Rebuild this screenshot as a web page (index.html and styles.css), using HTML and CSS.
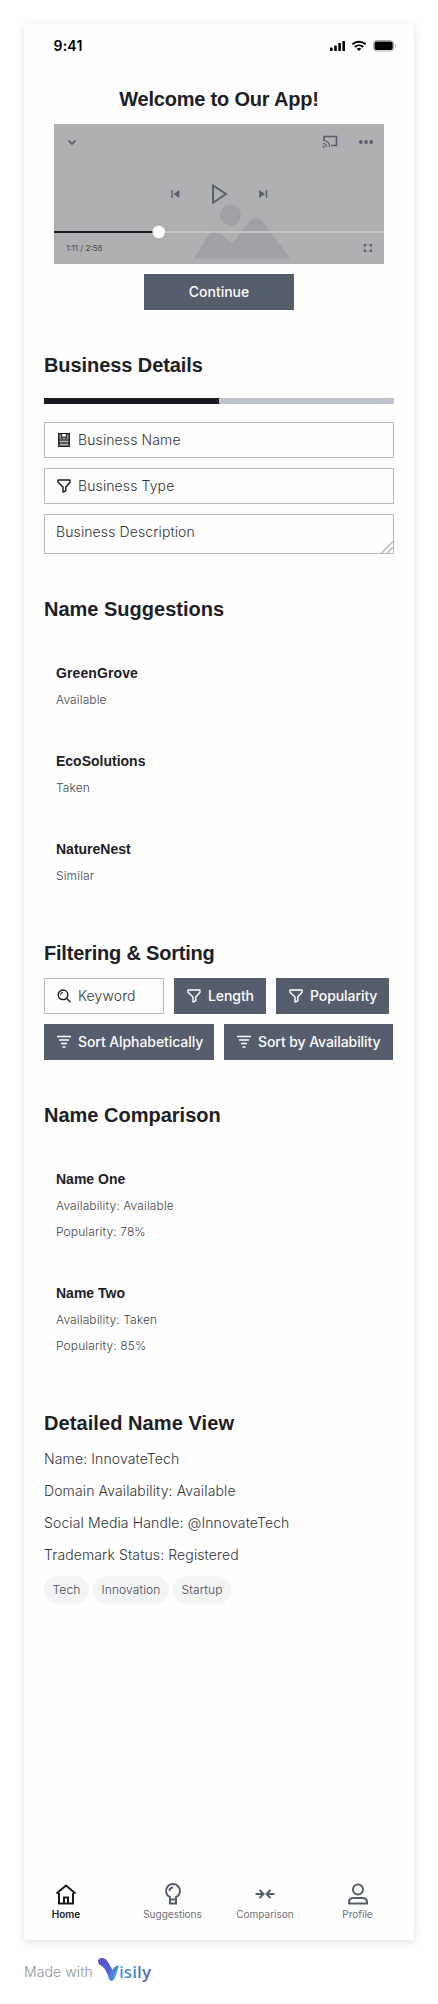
FILE: index.html
```html
<!DOCTYPE html>
<html lang="en">
<head>
<meta charset="utf-8">
<title>Welcome to Our App!</title>
<link rel="stylesheet" href="styles.css">
</head>
<body>
<svg width="0" height="0" class="defs">
  <defs>
    <symbol id="funnel" viewBox="0 0 16 16"><path d="M2 2h12v2.200L9.800 9v3.800L7 14V9L2 4.200z" fill="none" stroke="currentColor" stroke-width="1.4" stroke-linejoin="round"/></symbol>
    <symbol id="sort" viewBox="0 0 16 16"><path d="M1 2.500h14M3 6h10M5 9.500h6M6.500 13h3" fill="none" stroke="currentColor" stroke-width="1.3"/></symbol>
  </defs>
</svg>
<main class="phone">
  <header class="status">
    <span class="time">9:41</span>
    <svg width="68" height="14" viewBox="0 0 68 14">
      <g fill="#000"><rect x="1" y="9.500" width="2.600" height="3.500" rx=".6"/><rect x="5.200" y="7.500" width="2.600" height="5.500" rx=".6"/><rect x="9.300" y="5" width="2.600" height="8" rx=".6"/><rect x="13.400" y="3" width="2.600" height="10" rx=".6"/></g>
      <g fill="none" stroke="#000" stroke-width="1.900"><path d="M23.300 6.300a10 10 0 0 1 13.400 0"/><path d="M25.800 9a6.200 6.200 0 0 1 8.400 0"/></g><path d="M27.700 10.700a3.500 3.500 0 0 1 4.600 0L30 13z"/>
      <rect x="44.500" y="2.500" width="20" height="10.500" rx="3" fill="none" stroke="#aaa"/><rect x="45.500" y="3.500" width="18.200" height="8.500" rx="2" fill="#000"/><path d="M66 6.200v3.400q1.200-.5 1.200-1.700T66 6.200z" fill="#aaa"/>
    </svg>
  </header>

  <div class="content">
    <section class="welcome">
      <h2 class="h-welcome">Welcome to Our App!</h2>
      <svg class="video" width="330" height="140" viewBox="0 0 330 140">
        <rect width="330" height="140" fill="#b0b0b2"/>
        <g fill="#a0a0a5"><circle cx="176.500" cy="91" r="10.500"/><path d="M139.500 134.500L157 108.500q4-5 8 0l13 11.300L197.500 95q4.500-4 9 0l29.500 39.500z"/></g>
        <rect y="107" width="330" height="2" fill="#c5c5c8"/><rect y="107" width="104" height="2" fill="#171a1f"/><circle cx="104.700" cy="108" r="6.200" fill="#fff"/>
        <g fill="none" stroke="#565d6d" stroke-width="1.700"><path d="M14.500 16.500L18 20l3.500-3.500"/><path d="M270 16.500v-4h12.500v9H277"/><path d="M269 16.500q6.500 0 6.500 6.500M269 19.500q3.500 0 3.500 3.500" stroke-width="1.200"/><path d="M159 61.500v17.300L172 70z" stroke-width="1.900"/><path d="M118 66v8M212.500 66v8" stroke-width="1.300"/></g>
        <g fill="#565d6d"><circle cx="306.800" cy="18" r="1.900"/><circle cx="312" cy="18" r="1.900"/><circle cx="317.200" cy="18" r="1.900"/><circle cx="269.700" cy="22.800" r="1"/><path d="M125.300 66v8l-5.800-4zM205.200 66v8l5.800-4z"/></g>
        <path d="M310.500 123v-2.200h2M315.200 120.800h2v2.200M317.200 125v2.200h-2M312.500 127.200h-2v-2.200" fill="none" stroke="#565d6d" stroke-width="1.400"/>
        <text x="12" y="127" class="clock" textLength="36.500">1:11 / 2:58</text>
      </svg>
      <button class="btn continue">Continue</button>
    </section>

    <section>
      <h2 class="h-details">Business Details</h2>
      <div class="progress"><div class="bar"></div></div>
      <div class="field"><svg width="16" height="16" viewBox="0 0 16 16"><path d="M2.700 1.700h10.600v12.600H2.700z" fill="#8c8f95" stroke="#171a1f" stroke-width="1.300"/><path d="M5.700 2v4l2.300-1.300L10.300 6V2" fill="#fff" stroke="#171a1f"/><path d="M2.700 8h10.600M2.700 11h10.600" stroke="#171a1f" stroke-width="1.200"/><path d="M4 9.500h8M4 12.600h8" stroke="#ccc" stroke-width=".8"/></svg><span>Business Name</span></div>
      <div class="field"><svg width="16" height="16"><use href="#funnel"/></svg><span>Business Type</span></div>
      <div class="field area"><span>Business Description</span><svg class="grip" width="12" height="12" viewBox="0 0 12 12"><path d="M.5 12L12 .5M6 12l6-6" stroke="#bdc1ca" stroke-width="1.700"/></svg></div>
    </section>

    <section>
      <h2 class="h-suggest">Name Suggestions</h2>
      <div class="cards">
        <article class="card"><h3 class="t-green">GreenGrove</h3><p>Available</p></article>
        <article class="card"><h3 class="t-eco">EcoSolutions</h3><p>Taken</p></article>
        <article class="card"><h3 class="t-nature">NatureNest</h3><p>Similar</p></article>
      </div>
    </section>

    <section>
      <h2 class="h-filter">Filtering &amp; Sorting</h2>
      <div class="row">
        <div class="field keyword"><svg width="16" height="16" viewBox="0 0 16 16" fill="none" stroke="#171a1f"><circle cx="7" cy="6.800" r="4.800" stroke-width="1.400"/><path d="M10.500 10.300l4 4" stroke-width="1.500"/><path d="M4.500 6.800A2.500 2.500 0 0 1 7 4.300"/></svg><span>Keyword</span></div>
        <button class="btn w-length"><svg width="16" height="16"><use href="#funnel"/></svg>Length</button>
        <button class="btn w-pop"><svg width="16" height="16"><use href="#funnel"/></svg>Popularity</button>
      </div>
      <div class="row">
        <button class="btn w-alpha"><svg width="16" height="16"><use href="#sort"/></svg>Sort Alphabetically</button>
        <button class="btn w-avail"><svg width="16" height="16"><use href="#sort"/></svg>Sort by Availability</button>
      </div>
    </section>

    <section>
      <h2 class="h-compare">Name Comparison</h2>
      <div class="cards">
        <article class="card"><h3 class="t-one">Name One</h3><p>Availability: Available</p><p>Popularity: 78%</p></article>
        <article class="card"><h3 class="t-two">Name Two</h3><p>Availability: Taken</p><p>Popularity: 85%</p></article>
      </div>
    </section>

    <section>
      <h2 class="h-view">Detailed Name View</h2>
      <p class="line">Name: InnovateTech</p>
      <p class="line">Domain Availability: Available</p>
      <p class="line">Social Media Handle: @InnovateTech</p>
      <p class="line">Trademark Status: Registered</p>
      <div class="chips"><span class="chip c-tech">Tech</span><span class="chip c-innov">Innovation</span><span class="chip c-start">Startup</span></div>
    </section>
  </div>

  <nav class="tabs">
    <a class="tab active"><svg width="24" height="24" viewBox="0 0 24 24"><path d="M2.500 11.500L12 3.500l9.500 8M5 11v10.500h14V11M10 21.500v-6h4v6"/></svg>Home</a>
    <a class="tab"><svg width="24" height="24" viewBox="0 0 24 24"><path d="M9 17.500v-2.300a7 7 0 1 1 6 0v2.300zM9 17.500v4h6v-4M8.500 9A3.500 3.500 0 0 1 12 5.500"/></svg>Suggestions</a>
    <a class="tab"><svg width="24" height="24" viewBox="0 0 24 24"><path d="M2.500 12H10M6.500 8l4 4-4 4M21.500 12H14M17.500 8l-4 4 4 4"/></svg>Comparison</a>
    <a class="tab"><svg width="24" height="24" viewBox="0 0 24 24"><circle cx="12" cy="7.500" r="5"/><path d="M3 21.500v-1.500q0-4 5-4h8q5 0 5 4v1.500z"/></svg>Profile</a>
  </nav>
</main>

<footer class="made">
  <span class="madewith">Made with</span>
  <svg width="56" height="32" viewBox="0 0 56 32">
    <defs><linearGradient id="mark" x1="0" y1="0" x2="1" y2=".6"><stop offset="0" stop-color="#6a4fc4"/><stop offset=".6" stop-color="#4a5fd0"/><stop offset="1" stop-color="#4ba8de"/></linearGradient>
    <linearGradient id="word" x1="0" y1="0" x2="1" y2="0"><stop offset="0" stop-color="#4ba3dc"/><stop offset="1" stop-color="#5661c2"/></linearGradient></defs>
    <path d="M1 6Q.8 2 5 2q3.500 0 6 4l4.500 8q2-4.500 6.500-4.500L18 22q-1 3-3.300 3t-3-3Q9.500 13 4 9.500 1.200 8 1 6z" fill="url(#mark)"/>
    <text x="22" y="22" class="word" fill="url(#word)" textLength="32">isily</text>
  </svg>
</footer>
</body>
</html>
```

FILE: styles.css
```css
* { box-sizing: border-box; }
body { margin: 0; padding: 24px 24px 0; background: #fff; font-family: Inter, "Liberation Sans", sans-serif; color: #323539; }
.defs { position: absolute; }
h2, h3, p { margin: 0; }
svg { display: block; flex: none; }
.phone { width: 390px; height: 1916px; background: #fefefe; box-shadow: 0 2px 8px rgba(23, 26, 31, .14); display: flex; flex-direction: column; }
.status { height: 60px; padding: 14px 17px 0 29.500px; display: flex; justify-content: space-between; align-items: flex-start; }
.time { font-size: 14px; line-height: 16px; font-weight: 600; color: #000; letter-spacing: .2px; }
.content { padding: 0 20px; display: flex; flex-direction: column; gap: 40px; flex: 1; }
section { display: flex; flex-direction: column; gap: 10px; }
.welcome { align-items: center; }
h2 { font: 700 20px/30px "Liberation Sans", sans-serif; color: #1d2025; white-space: nowrap; }
h3 { font: 700 14px/22px "Liberation Sans", sans-serif; color: #1d2025; }
.h-welcome { letter-spacing: -.2px; }
.h-details { letter-spacing: -.08px; }
.h-filter { letter-spacing: -.2px; }
.h-view { letter-spacing: .08px; }
.t-green { letter-spacing: .1px; }
.clock { font-size: 8px; fill: #444; }
.btn { height: 36px; border: 0; padding: 0 0 0 12px; background: #565d6d; color: #fff; font: 500 14px/22px Inter, sans-serif; letter-spacing: -.08px; display: flex; align-items: center; gap: 6px; white-space: nowrap; }
.continue { width: 150px; padding: 0; justify-content: center; letter-spacing: 0; }
.progress { height: 6px; margin: 8px 0; background: #bdc1ca; }
.bar { width: 50%; height: 6px; background: #171a1f; }
.field { position: relative; height: 36px; border: 1px solid #b9babd; padding: 0 11px; display: flex; align-items: center; gap: 6px; font-size: 14px; line-height: 22px; font-weight: 300; letter-spacing: .11px; color: #323539; }
.field svg { color: #171a1f; }
.area { height: 40px; align-items: flex-start; padding-top: 6px; }
.grip { position: absolute; right: 0; bottom: 0; }
.card { padding: 28px 12px 12px; display: flex; flex-direction: column; gap: 6px; }
.card p { font-size: 12px; line-height: 20px; font-weight: 300; letter-spacing: .12px; color: #43464b; }
.row { display: flex; gap: 10px; }
.keyword { width: 120px; }
.w-length { width: 92px; }
.w-pop { width: 113px; }
.w-alpha { width: 170px; }
.w-avail { width: 169px; }
.line { font-size: 14px; line-height: 22px; font-weight: 300; letter-spacing: .12px; }
.chips { display: flex; gap: 4px; }
.chip { height: 28px; border-radius: 14px; background: #f3f4f6; color: #43474f; font-size: 12px; line-height: 28px; text-align: center; font-weight: 300; letter-spacing: .12px; }
.c-tech { width: 45px; }
.c-innov { width: 76px; }
.c-start { width: 58px; }
.tabs { height: 58px; padding: 0 10px; display: grid; grid-template-columns: 64px 149px 36px 149px; }
.tab { display: flex; flex-direction: column; align-items: center; font-size: 10px; line-height: 16px; color: #6b7079; }
.tab svg { fill: none; stroke: #565d6d; stroke-width: 2; }
.tab.active { color: #171a1f; font-weight: 600; }
.tab.active svg { stroke: #171a1f; }
.made { display: flex; padding-top: 16px; gap: 4px; color: #9095a0; }
.madewith { width: 69px; font-size: 14px; line-height: 32px; font-weight: 300; letter-spacing: .1px; white-space: nowrap; }
.word { font: 600 17px "Open Sans", sans-serif; }
```
